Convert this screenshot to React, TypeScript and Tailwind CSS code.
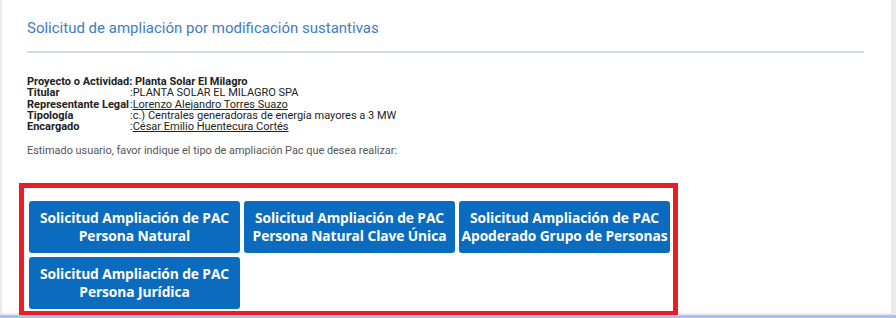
import React from 'react';

const rows: { label: string; value: string; link?: boolean }[] = [
  { label: 'Titular', value: 'PLANTA SOLAR EL MILAGRO SPA' },
  { label: 'Representante Legal', value: 'Lorenzo Alejandro Torres Suazo', link: true },
  { label: 'Tipología', value: 'c.) Centrales generadoras de energía mayores a 3 MW' },
  { label: 'Encargado', value: 'César Emilio Huentecura Cortés', link: true },
];

const buttons = [
  ['Solicitud Ampliación de PAC', 'Persona Natural'],
  ['Solicitud Ampliación de PAC', 'Persona Natural Clave Única'],
  ['Solicitud Ampliación de PAC', 'Apoderado Grupo de Personas'],
  ['Solicitud Ampliación de PAC', 'Persona Jurídica'],
];

export default function App() {
  return (
    <div className="w-[896px] h-[318px] bg-[#ebebeb] flex flex-col overflow-hidden">
      <div className="flex h-[313px]">
        <div className="ml-[2px] w-[889px] bg-white pl-[25px] pt-[18px] font-['Roboto',sans-serif]">
          <h1 className="text-[15px] leading-[21px] text-[#3d7cc4] font-normal">
            Solicitud de ampliación por modificación sustantivas
          </h1>
          <div className="mt-[12px] w-[837px] h-[2px] bg-[#d5dbe3]" />

          <div className="mt-[23px] text-[11px] leading-[11.3px] text-[#222] whitespace-nowrap">
            <div className="font-bold">Proyecto o Actividad: Planta Solar El Milagro</div>
            {rows.map((r) => (
              <div key={r.label} className="flex">
                <span className="w-[103px] font-bold">{r.label}</span>
                <span>
                  :{r.link ? <span className="underline">{r.value}</span> : r.value}
                </span>
              </div>
            ))}
          </div>

          <p className="mt-[12px] text-[10.9px] leading-[14px] text-[#555] whitespace-nowrap">
            Estimado usuario, favor indique el tipo de ampliación Pac que desea realizar:
          </p>

          <div className="mt-[25px] ml-[-8px] w-[659px] h-[133px] border-[5px] border-[#ec1c24] pt-[13px] pl-[5px]">
            <div className="flex flex-wrap gap-x-[4px] gap-y-[4px] w-[650px]">
              {buttons.map(([a, b]) => (
                <button
                  key={b}
                  className="w-[211px] h-[52px] rounded-[3px] bg-[#0b6cbf] text-white font-['Open_Sans',sans-serif] font-bold text-[13.8px] leading-[18px] tracking-[-0.1px] whitespace-nowrap flex flex-col items-center justify-center"
                >
                  <span>{a}</span>
                  <span>{b}</span>
                </button>
              ))}
            </div>
          </div>
        </div>
      </div>
      <div className="h-[2px]" />
      <div className="h-[3px] bg-[#a7c0ec]" />
    </div>
  );
}
